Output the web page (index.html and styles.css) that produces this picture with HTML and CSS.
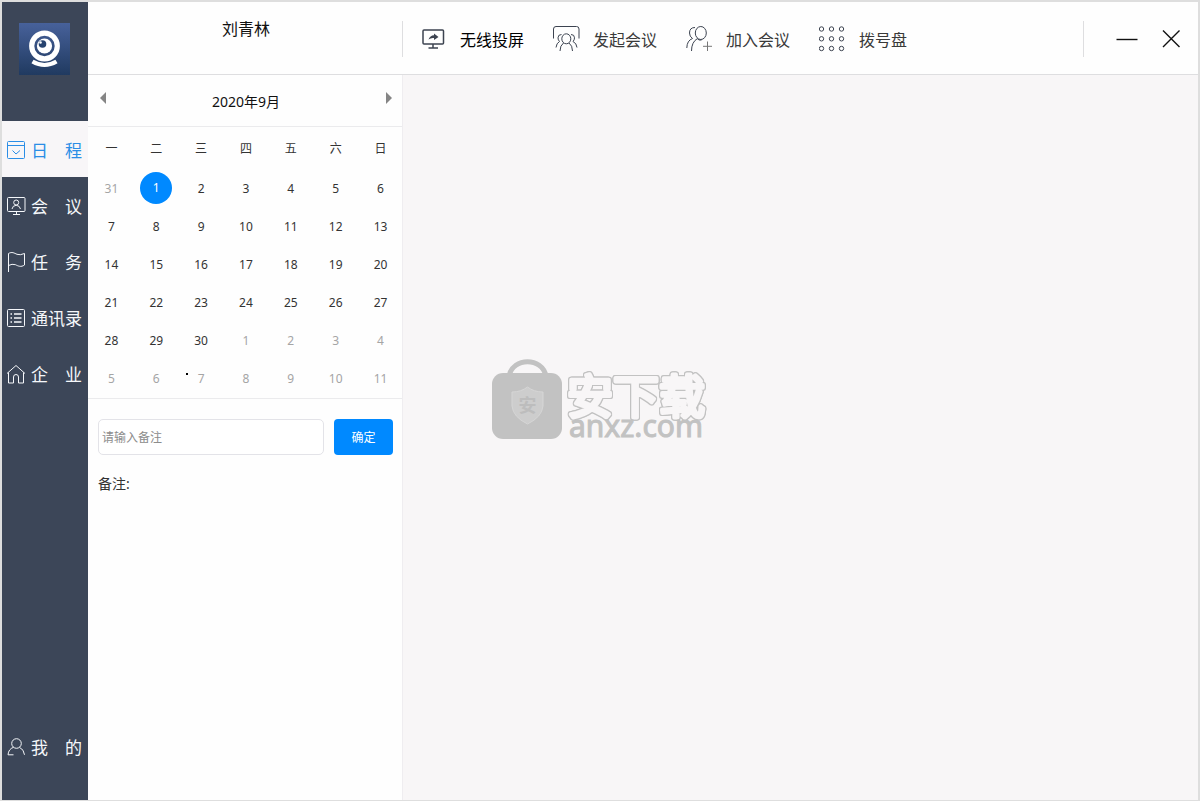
FILE: index.html
```
<!DOCTYPE html>
<html lang="zh-CN">
<head>
<meta charset="utf-8">
<meta name="viewport" content="width=device-width, initial-scale=1">
<title>日程</title>
<link rel="stylesheet" href="styles.css">
</head>
<body>
<div class="app">
  <aside class="sidebar">
    <svg class="logo" viewBox="0 0 52 52" aria-hidden="true">
      <defs><linearGradient id="logo-bg" x1="0" y1="0" x2="0" y2="1"><stop offset="0" stop-color="#47619a"/><stop offset="1" stop-color="#203a60"/></linearGradient></defs>
      <rect width="51" height="52" fill="url(#logo-bg)"/>
      <circle cx="25.500" cy="23" r="12.800" fill="none" stroke="#fff" stroke-width="5.200"/>
      <circle cx="25.500" cy="23" r="7.600" fill="#fff"/>
      <circle cx="23.500" cy="21" r="3.800" fill="#27436f"/>
      <circle cx="21.500" cy="19.500" r="1.300" fill="#fff"/>
      <path d="M13.500 38.500Q25.500 45.500 37.500 38.500" fill="none" stroke="#fff" stroke-width="4.200"/>
    </svg>
    <nav class="nav">
      <a class="nav-item active" href="#schedule"><svg class="nav-icon" viewBox="0 0 20 20"><rect x="1.500" y="1.500" width="17" height="17" rx="1"/><path d="M1.500 5.500H18.500M6.500 10.500L10 14L14 10.500"/></svg>日　程</a>
      <a class="nav-item" href="#meeting"><svg class="nav-icon" viewBox="0 0 20 20"><rect x="1.500" y="1.500" width="17.500" height="14" rx="1"/><circle cx="10.200" cy="6.500" r="2.500"/><path d="M6 13Q6.500 9.500 10.200 9.300Q13.800 9.500 14.500 13M10.500 15.500V18.500M7 18.500H14"/></svg>会　议</a>
      <a class="nav-item" href="#task"><svg class="nav-icon" viewBox="0 0 20 20"><path d="M2.500 20V1.500C6 -.5 8 1 11 2.300Q14 3.500 18.500 1.500V13C15 15.500 12 14 9.500 12.700Q6 11.500 2.500 13.500"/></svg>任　务</a>
      <a class="nav-item" href="#contacts"><svg class="nav-icon" viewBox="0 0 20 20"><rect x="1.500" y="1.500" width="17" height="17" rx="1"/><path d="M4.500 6H6M4.500 10H6M4.500 14H6M8 6H15.500M8 10H15.500M8 14H15.500" stroke-width="1.300"/></svg>通讯录</a>
      <a class="nav-item" href="#company"><svg class="nav-icon" viewBox="0 0 20 20"><path d="M1 9.500L10 1.500L19 9.500M2.500 8.500V19H7.500V13Q7.500 10.500 10 10.500T12.500 13V19H17.500V8.500"/></svg>企　业</a>
    </nav>
    <a class="nav-item mine" href="#mine"><svg class="nav-icon" viewBox="0 0 20 20"><circle cx="10.500" cy="6.500" r="4.800"/><path d="M7.500 10.300Q2.500 12 2 17.800H7.500M13.500 10.300Q18 12.500 18.500 17.800"/></svg>我　的</a>
  </aside>

  <header class="header">
    <div class="user">刘青林</div>
    <div class="toolbar">
      <button class="tool primary" type="button"><svg class="tool-icon" viewBox="0 0 27 28"><rect x="3" y="5" width="20.500" height="14" rx="1" stroke-width="1.500"/><path d="M13 19V23M8.500 23H18" stroke-width="1.500"/><path d="M8.500 14.500Q10 10.500 14 10.300V8.500L18.500 12L14 15V13Q11 12.500 8.500 14.500Z" fill="#3c4350" stroke="none"/></svg>无线投屏</button>
      <button class="tool" type="button"><svg class="tool-icon" viewBox="0 0 27 28"><path d="M.5 13.500V4Q.5 1.500 3 1.500H23.500Q26 1.500 26 4V13.500"/><ellipse cx="13.300" cy="13.800" rx="4.500" ry="5"/><path d="M8.500 9.500Q5 9.500 5 12.800Q5 15 6.500 16.500Q3.500 18 3 22.500M18 9.500Q21.500 9.500 21.500 12.800Q21.500 15 20 16.500Q23.500 18 24 22.500M10.500 18Q7 20.500 7 26M16 18Q19.500 20.500 19.500 26"/></svg>发起会议</button>
      <button class="tool" type="button"><svg class="tool-icon" viewBox="0 0 27 28"><ellipse cx="14.800" cy="8" rx="5.500" ry="6.500"/><path d="M9 2.500Q3.500 2.500 3.500 8Q3.500 11.500 6.500 13.500Q1 15.500 .8 23M11.500 13.500Q5.500 17 5.500 26M11.500 14Q13 15.500 15.500 15"/><path d="M21.500 16.500V26M17 21.300H26" stroke="#777"/></svg>加入会议</button>
      <button class="tool" type="button"><svg class="tool-icon" viewBox="0 0 27 28"><g stroke-width="1"><circle cx="2.500" cy="4" r="2.200"/><circle cx="12.500" cy="4" r="2.200"/><circle cx="22.500" cy="4" r="2.200"/><circle cx="2.500" cy="13.800" r="2.200"/><circle cx="12.500" cy="13.800" r="2.200"/><circle cx="22.500" cy="13.800" r="2.200"/><circle cx="2.500" cy="23.500" r="2.200"/><circle cx="12.500" cy="23.500" r="2.200"/><circle cx="22.500" cy="23.500" r="2.200"/></g></svg>拨号盘</button>
    </div>
    <div class="window-controls">
      <button class="window-button" type="button" aria-label="最小化"><svg viewBox="0 0 22 22"><path d="M0.500 11.500H21.500"/></svg></button>
      <button class="window-button" type="button" aria-label="关闭"><svg viewBox="0 0 22 22"><path d="M3 2.500L19.500 19M19.500 2.500L3 19"/></svg></button>
    </div>
  </header>

  <section class="panel">
    <div class="month">
      <button class="month-arrow" type="button" aria-label="上个月"><svg viewBox="0 0 6 12"><path d="M6 0V12L0 6Z"/></svg></button>
      <h1 class="month-title">2020年9月</h1>
      <button class="month-arrow" type="button" aria-label="下个月"><svg viewBox="0 0 6 12"><path d="M0 0V12L6 6Z"/></svg></button>
    </div>
    <div class="calendar-wrap">
      <table class="calendar">
        <thead><tr><th>一</th><th>二</th><th>三</th><th>四</th><th>五</th><th>六</th><th>日</th></tr></thead>
        <tbody>
          <tr><td class="other">31</td><td><span class="selected">1</span></td><td>2</td><td>3</td><td>4</td><td>5</td><td>6</td></tr>
          <tr><td>7</td><td>8</td><td>9</td><td>10</td><td>11</td><td>12</td><td>13</td></tr>
          <tr><td>14</td><td>15</td><td>16</td><td>17</td><td>18</td><td>19</td><td>20</td></tr>
          <tr><td>21</td><td>22</td><td>23</td><td>24</td><td>25</td><td>26</td><td>27</td></tr>
          <tr><td>28</td><td>29</td><td>30</td><td class="other">1</td><td class="other">2</td><td class="other">3</td><td class="other">4</td></tr>
          <tr><td class="other">5</td><td class="other">6</td><td class="other">7</td><td class="other">8</td><td class="other">9</td><td class="other">10</td><td class="other">11</td></tr>
        </tbody>
      </table>
      <span class="marker"></span>
    </div>
    <form class="note-form">
      <input class="note-input" type="text" placeholder="请输入备注" aria-label="备注">
      <button class="note-submit" type="button">确定</button>
    </form>
    <p class="note-label">备注:</p>
  </section>

  <main class="content">
    <svg class="watermark" viewBox="0 0 216 84" role="img" aria-label="安下载 anxz.com">
      <path d="M17 17C21 -2 50 -2 54 17" fill="none" stroke="#c2c2c2" stroke-width="5"/>
      <rect y="14" width="70" height="66" rx="11" fill="#c2c2c2"/>
      <path d="M35.500 28Q42 33 51 33V47Q50 58 35.500 65Q21 58 20 47V33Q29 33 35.500 28Z" fill="#cdcdcd" stroke="#d6d6d6"/>
      <text class="mark-shield" x="35.500" y="53" text-anchor="middle">安</text>
      <text class="mark-name" x="75" y="54">安下载</text>
      <text class="mark-site" x="77" y="78">anxz.com</text>
    </svg>
  </main>
</div>
</body>
</html>
```
FILE: styles.css
```
* {
  box-sizing: border-box;
}

body {
  margin: 0;
  font-family: "Noto Sans", "Noto Sans CJK SC", sans-serif;
  font-size: 12px;
  color: #333;
}

button,
input {
  font: inherit;
}

button {
  padding: 0;
  border: 0;
  background: none;
  color: inherit;
  cursor: pointer;
}

.app {
  display: grid;
  grid-template-columns: 86px 315px 1fr;
  grid-template-rows: 73px 1fr;
  min-height: 100vh;
  border: 2px solid #dedede;
  border-bottom-width: 1px;
  background: #fefefe;
}

.sidebar {
  grid-row: 1 / 3;
  display: flex;
  flex-direction: column;
  padding: 21px 0 26px;
  background: #3c4658;
}

.logo {
  width: 52px;
  height: 52px;
  margin: 0 17px 46px;
}

.nav-item {
  display: flex;
  align-items: center;
  gap: 5px;
  height: 56px;
  padding-left: 4px;
  color: #f5f7fa;
  font-size: 17px;
  white-space: nowrap;
  text-decoration: none;
}

.nav-item.active {
  background: #f8f6f8;
  color: #2b8ee6;
}

.mine {
  margin-top: auto;
}

.nav-icon {
  flex: none;
  width: 20px;
  height: 20px;
  margin-top: 1px;
  overflow: visible;
  fill: none;
  stroke: currentColor;
}

.header {
  grid-column: 2 / 4;
  display: flex;
  align-items: center;
  padding-top: 2px;
  border-bottom: 1px solid #dedee0;
}

.user {
  align-self: flex-start;
  width: 314px;
  padding: 13px 0 0 2px;
  color: #111;
  font-size: 16px;
  line-height: 24px;
  text-align: center;
}

.toolbar {
  display: flex;
  flex: 1;
  align-items: center;
  gap: 29px;
  height: 36px;
  padding-left: 17px;
  border-left: 1px solid #dedee0;
}

.tool {
  display: flex;
  align-items: center;
  gap: 13px;
  color: #3a3a3a;
  font-size: 16px;
  white-space: nowrap;
}

.tool.primary {
  color: #000;
}

.tool-icon {
  width: 27px;
  height: 28px;
  fill: none;
  stroke: #3c4350;
}

.window-controls {
  display: flex;
  align-items: center;
  gap: 22px;
  height: 36px;
  padding: 0 16px 0 32px;
  border-left: 1px solid #dedee0;
}

.window-button svg {
  display: block;
  width: 22px;
  height: 22px;
  fill: none;
  stroke: #111;
  stroke-width: 1.4;
}

.panel {
  border-right: 1px solid #efedf0;
}

.month {
  display: flex;
  align-items: center;
  justify-content: space-between;
  height: 52px;
  padding: 0 10px 0 12px;
  border-bottom: 1px solid #ebebed;
}

.month-arrow {
  padding-bottom: 5px;
}

.month-arrow svg {
  display: block;
  width: 6px;
  height: 12px;
  fill: #858585;
}

.month-title {
  margin: 0;
  color: #111;
  font-size: 14px;
  font-weight: 400;
}

.calendar-wrap {
  position: relative;
  border-bottom: 1px solid #ebebed;
}

.calendar {
  width: 100%;
  border-collapse: collapse;
  table-layout: fixed;
}

.calendar th,
.calendar td {
  height: 38px;
  padding: 0 0 2px 2px;
  font-weight: 400;
  text-align: center;
}

.calendar th {
  height: 43px;
}

.calendar .other {
  color: #a5a5a5;
}

.selected {
  display: block;
  width: 32px;
  margin: 0 auto;
  border-radius: 50%;
  background: #0089ff;
  color: #fff;
  line-height: 32px;
}

.marker {
  position: absolute;
  left: 98px;
  bottom: 23px;
  width: 2px;
  height: 2px;
  background: #000;
}

.note-form {
  display: flex;
  gap: 10px;
  padding: 20px 9px 0 10px;
}

.note-input {
  flex: 1;
  min-width: 0;
  height: 36px;
  padding: 0 3px;
  border: 1px solid #e3e3e8;
  border-radius: 5px;
  background: #fff;
}

.note-input::placeholder {
  color: #8c8c8c;
}

.note-submit {
  width: 59px;
  height: 36px;
  border-radius: 4px;
  background: #0089ff;
  color: #fff;
}

.note-label {
  margin: 0;
  padding: 17px 10px;
  font-size: 14px;
  line-height: 24px;
}

.content {
  display: flex;
  align-items: flex-start;
  padding: 284px 0 0 89px;
  background: #f8f6f7;
}

.watermark {
  width: 216px;
  height: 84px;
  overflow: visible;
}

.mark-name {
  fill: #f8f6f7;
  stroke: #f8f6f7;
  stroke-width: 4px;
  stroke-linejoin: round;
  font-family: "Noto Sans CJK SC", sans-serif;
  font-size: 46px;
  filter: drop-shadow(1px 0 0 #c2c2c2) drop-shadow(-1px 0 0 #c2c2c2) drop-shadow(0 1px 0 #c2c2c2) drop-shadow(0 -1px 0 #c2c2c2);
}

.mark-site {
  fill: #c2c2c2;
  stroke: #c2c2c2;
  font-size: 30px;
}

.mark-shield {
  fill: #bdbdbd;
  font-size: 18px;
  font-weight: 700;
}
```
